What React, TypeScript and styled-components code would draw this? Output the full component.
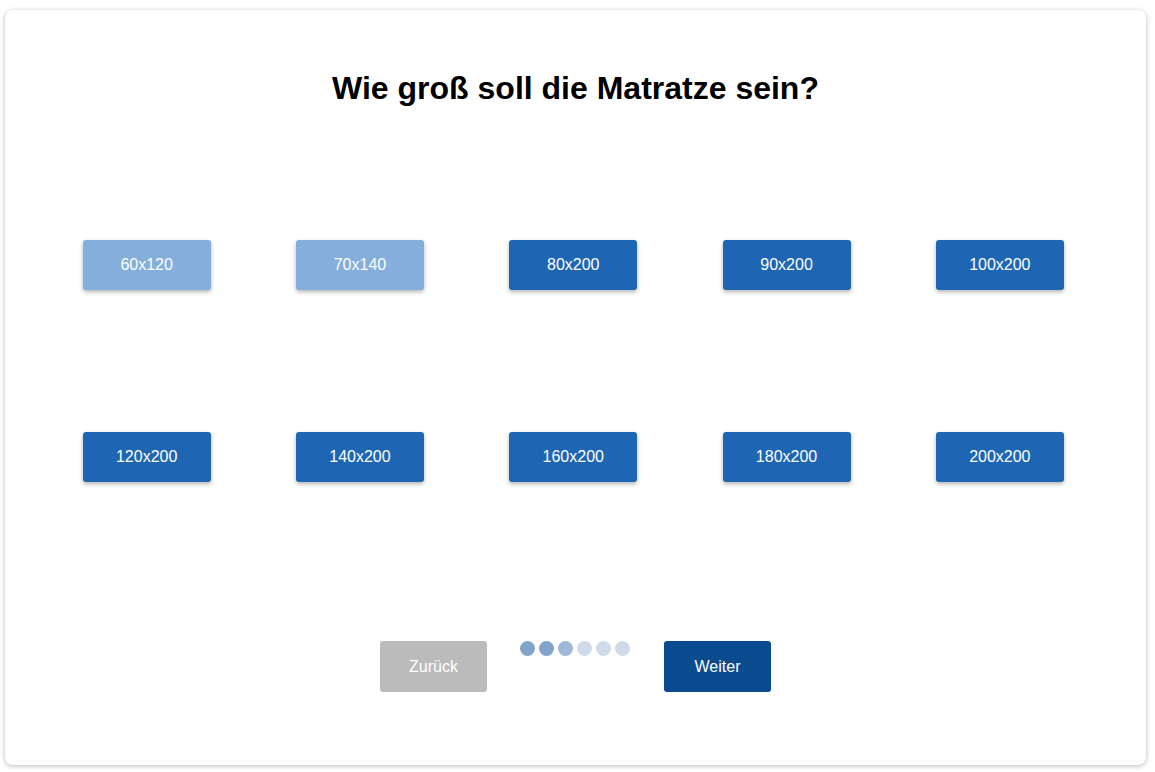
import React from "react";
import styled, { createGlobalStyle } from "styled-components";

const Global = createGlobalStyle`
  html, body { margin: 0; padding: 0; background: #ffffff; }
  body { font-family: "Liberation Sans", Arial, sans-serif; }
`;

const Page = styled.div`
  padding: 10px 9px 7px 5px;
  box-sizing: border-box;
  width: 1155px;
  height: 772px;
`;

const Card = styled.div`
  box-sizing: border-box;
  height: 755px;
  background: #fff;
  border-radius: 8px;
  box-shadow: 0 1px 5px rgba(0, 0, 0, 0.28);
  padding-top: 60px;
  display: flex;
  flex-direction: column;
  align-items: stretch;
`;

const Title = styled.h1`
  margin: 0;
  font-family: "Liberation Sans", Arial, sans-serif;
  font-size: 32px;
  line-height: 37px;
  font-weight: bold;
  color: #000;
  text-align: center;
`;

const Grid = styled.div`
  margin-top: 133px;
  display: grid;
  grid-template-columns: repeat(5, 213.3px);
  row-gap: 142px;
  padding-left: 35px;
  justify-items: center;
`;

const SizeButton = styled.button<{ $muted?: boolean }>`
  width: 128px;
  height: 50px;
  border: none;
  border-radius: 3px;
  background: ${(p) => (p.$muted ? "#84aedc" : "#1e66b3")};
  color: #fff;
  font-family: "Liberation Sans", Arial, sans-serif;
  font-size: 16px;
  box-shadow: 0 2px 4px rgba(0, 0, 0, 0.3);
  cursor: pointer;
  padding: 0;
`;

const Nav = styled.div`
  margin-top: 159px;
  display: flex;
  justify-content: center;
  align-items: flex-start;
  gap: 33px;
`;

const NavButton = styled.button<{ $variant: "back" | "next" }>`
  width: 107px;
  height: 51px;
  border: none;
  border-radius: 3px;
  background: ${(p) => (p.$variant === "back" ? "#bbbbbb" : "#0a4a8f")};
  color: #fff;
  font-family: "Liberation Sans", Arial, sans-serif;
  font-size: 16px;
  padding: 0;
  cursor: pointer;
`;

const Dots = styled.div`
  display: flex;
  gap: 4px;
  width: 111px;
`;

const Dot = styled.span<{ $color: string }>`
  width: 15px;
  height: 15px;
  border-radius: 50%;
  background: ${(p) => p.$color};
`;

const sizes = [
  { label: "60x120", muted: true },
  { label: "70x140", muted: true },
  { label: "80x200" },
  { label: "90x200" },
  { label: "100x200" },
  { label: "120x200" },
  { label: "140x200" },
  { label: "160x200" },
  { label: "180x200" },
  { label: "200x200" },
];

const dotColors = ["#82a4c9", "#82a4c9", "#9fb8d6", "#cfdbe9", "#cfdbe9", "#cfdbe9"];

export default function App() {
  return (
    <>
      <Global />
      <Page>
        <Card>
          <Title>Wie groß soll die Matratze sein?</Title>
          <Grid>
            {sizes.map((s) => (
              <SizeButton key={s.label} $muted={s.muted}>
                {s.label}
              </SizeButton>
            ))}
          </Grid>
          <Nav>
            <NavButton $variant="back">Zurück</NavButton>
            <Dots>
              {dotColors.map((c, i) => (
                <Dot key={i} $color={c} />
              ))}
            </Dots>
            <NavButton $variant="next">Weiter</NavButton>
          </Nav>
        </Card>
      </Page>
    </>
  );
}
